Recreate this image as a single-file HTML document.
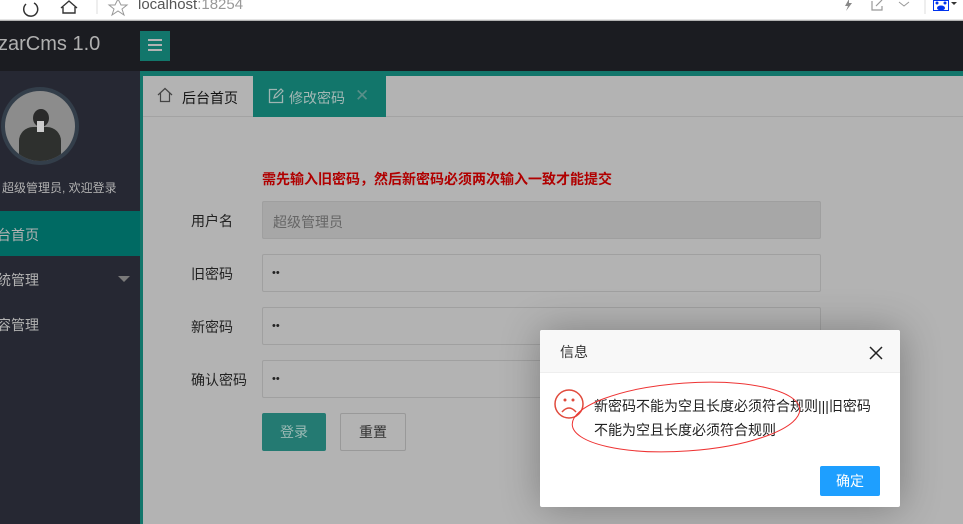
<!DOCTYPE html>
<html><head><meta charset="utf-8"><style>
*{margin:0;padding:0;box-sizing:border-box}
body{width:963px;height:524px;overflow:hidden;position:relative;background:#b3b3b3;font-family:"Liberation Sans","Noto Sans CJK SC",sans-serif;font-size:14px}
.abs{position:absolute}
</style></head><body>
<div class="abs" style="left:0;top:0;width:963px;height:20px;background:#fff;border-bottom:1px solid #e5e5e5"></div>
<svg class="abs" style="left:0;top:0" width="963" height="20">
<path d="M26 4 a7 7 0 1 0 8 -1" stroke="#333" stroke-width="1.5" fill="none"/>
<path d="M61 8 L69 1 L77 8 M63 7 V13 H75 V7" stroke="#333" stroke-width="1.4" fill="none"/>
<line x1="97" y1="0" x2="97" y2="14" stroke="#ddd"/>
<path d="M118 -1 L121 5 L127 5 L122 9 L124 15 L118 11 L112 15 L114 9 L109 5 L115 5Z" stroke="#999" fill="none"/>
<path d="M849 -1 L845 6 L848 6 L846 11 L852 3 L849 3Z" fill="#888"/>
<path d="M872 1 V10 H882 V6 M876 6 L882 0" stroke="#999" fill="none" stroke-width="1.2"/>
<path d="M899 2 L904 6 L909 2" stroke="#999" fill="none"/>
<line x1="925" y1="0" x2="925" y2="14" stroke="#ddd"/>
<rect x="933.5" y="0.5" width="15" height="10" stroke="#0033ee" fill="#fff"/>
<ellipse cx="941" cy="8" rx="4" ry="2.5" fill="#0033ee"/>
<circle cx="937" cy="3" r="1.5" fill="#0033ee"/><circle cx="945" cy="3" r="1.5" fill="#0033ee"/>
<path d="M951 2 L957 2 L954 5Z" fill="#333"/>
</svg>
<div class="abs" style="left:138px;top:-4px;font-size:15px;color:#555">localhost<span style="color:#999">:18254</span></div>
<div class="abs" style="left:0;top:21px;width:963px;height:50px;background:#1b1c21"></div>
<div class="abs" style="left:-2px;top:33px;font-size:20px;color:#b0b0b0">zarCms 1.0</div>
<div class="abs" style="left:140px;top:31px;width:30px;height:30px;background:#12766b"></div>
<div class="abs" style="left:148px;top:39px;width:14px;height:2px;background:#b3b3b3;box-shadow:0 5px 0 #b3b3b3,0 10px 0 #b3b3b3"></div>
<div class="abs" style="left:0;top:71px;width:140px;height:453px;background:#262833"></div>
<div class="abs" style="left:140px;top:71px;width:3px;height:453px;background:#12766b"></div>
<div class="abs" style="left:143px;top:71px;width:820px;height:5px;background:#12766b"></div>
<div class="abs" style="left:1px;top:87px;width:78px;height:78px;border-radius:50%;background:#333e4a"></div>
<div class="abs" style="left:5px;top:91px;width:70px;height:70px;border-radius:50%;background:#8c8c8c;overflow:hidden">
 <div class="abs" style="left:28px;top:18px;width:16px;height:18px;border-radius:50%;background:#2a2a2a"></div>
 <div class="abs" style="left:14px;top:36px;width:42px;height:40px;border-radius:14px 14px 0 0;background:#2e302e"></div>
 <div class="abs" style="left:32px;top:30px;width:7px;height:11px;background:#ccc"></div>
</div>
<div class="abs" style="left:2px;top:179px;font-size:12px;color:#b0b0b0">超级管理员, 欢迎登录</div>
<div class="abs" style="left:0;top:211px;width:140px;height:45px;background:#006a63"></div>
<div class="abs" style="left:-3px;top:225px;color:#b3b3b3">台首页</div>
<div class="abs" style="left:-3px;top:270px;color:#b3b3b3">统管理</div>
<div class="abs" style="left:118px;top:276px;width:0;height:0;border-left:6px solid transparent;border-right:6px solid transparent;border-top:6px solid #7a7a7a"></div>
<div class="abs" style="left:-3px;top:315px;color:#b3b3b3">容管理</div>
<div class="abs" style="left:143px;top:116px;width:820px;height:1px;background:#a3a3a3"></div>
<svg class="abs" style="left:157px;top:87px" width="16" height="16"><path d="M1 8 L8 1.5 L15 8 M3.5 6 V14.5 H12.5 V6" stroke="#444" stroke-width="1.2" fill="none"/></svg>
<div class="abs" style="left:182px;top:88px;color:#111">后台首页</div>
<div class="abs" style="left:253px;top:76px;width:133px;height:41px;background:#12766b"></div>
<svg class="abs" style="left:268px;top:88px" width="16" height="16"><path d="M9 1.5 H1.5 V14.5 H14.5 V7" stroke="#9fb5b2" stroke-width="1.3" fill="none"/><path d="M6 10 L7 7 L13 1 L15 3 L9 9Z" stroke="#9fb5b2" stroke-width="1.2" fill="none"/></svg>
<div class="abs" style="left:289px;top:88px;color:#a3b8b5">修改密码</div>
<div class="abs" style="left:355px;top:86px;color:#5a8f89;font-size:17px">✕</div>
<div class="abs" style="left:262px;top:169px;font-size:14px;font-weight:bold;color:#b00000">需先输入旧密码，然后新密码必须两次输入一致才能提交</div>
<div class="abs" style="left:191px;top:211px;color:#222">用户名</div>
<div class="abs" style="left:262px;top:201px;width:559px;height:38px;background:#a7a7a7;border:1px solid #9f9f9f;border-radius:2px"></div>
<div class="abs" style="left:273px;top:212px;color:#666">超级管理员</div>
<div class="abs" style="left:191px;top:264px;color:#222">旧密码</div>
<div class="abs" style="left:262px;top:254px;width:559px;height:38px;border:1px solid #a0a0a0;border-radius:2px"></div>
<div class="abs" style="left:191px;top:317px;color:#222">新密码</div>
<div class="abs" style="left:262px;top:307px;width:559px;height:38px;border:1px solid #a0a0a0;border-radius:2px"></div>
<div class="abs" style="left:191px;top:370px;color:#222">确认密码</div>
<div class="abs" style="left:262px;top:360px;width:559px;height:38px;border:1px solid #a0a0a0;border-radius:2px"></div>
<div class="abs" style="left:272px;top:267px;color:#222;font-size:11px">••</div>
<div class="abs" style="left:272px;top:320px;color:#222;font-size:11px">••</div>
<div class="abs" style="left:272px;top:373px;color:#222;font-size:11px">••</div>
<div class="abs" style="left:262px;top:413px;width:64px;height:38px;background:#247a72;border-radius:2px;color:#9bbab5;text-align:center;line-height:38px">登录</div>
<div class="abs" style="left:340px;top:413px;width:66px;height:38px;border:1px solid #999;border-radius:2px;color:#333;text-align:center;line-height:36px">重置</div>
<div class="abs" style="left:540px;top:330px;width:360px;height:177px;background:#fff;border-radius:2px;box-shadow:1px 1px 40px rgba(0,0,0,.3);overflow:hidden">
 <div style="height:43px;background:#f8f8f8;border-bottom:1px solid #eee;padding:12px 20px;color:#333">信息</div>
 <div class="abs" style="left:54px;top:64px;color:#222;line-height:24px;font-size:14px;width:290px">新密码不能为空且长度必须符合规则|||旧密码<br>不能为空且长度必须符合规则</div>
 <div class="abs" style="left:280px;top:136px;width:60px;height:30px;background:#1e9fff;border-radius:2px;color:#fff;text-align:center;line-height:30px">确定</div>
</div>
<svg class="abs" style="left:540px;top:330px" width="360" height="177">
 <path d="M330 17 L342 29 M342 17 L330 29" stroke="#222" stroke-width="1.5"/>
 <circle cx="29" cy="74" r="14" stroke="#e04a3c" stroke-width="1.5" fill="none"/>
 <circle cx="25" cy="70" r="1.5" fill="#e04a3c"/><circle cx="33" cy="70" r="1.5" fill="#e04a3c"/>
 <path d="M22 82 Q29 74 36 82" stroke="#e04a3c" stroke-width="1.5" fill="none"/>
 <ellipse cx="146" cy="87" rx="114" ry="34" transform="rotate(-4 146 87)" stroke="#e33" stroke-width="1" fill="none"/>
</svg>
</body></html>
